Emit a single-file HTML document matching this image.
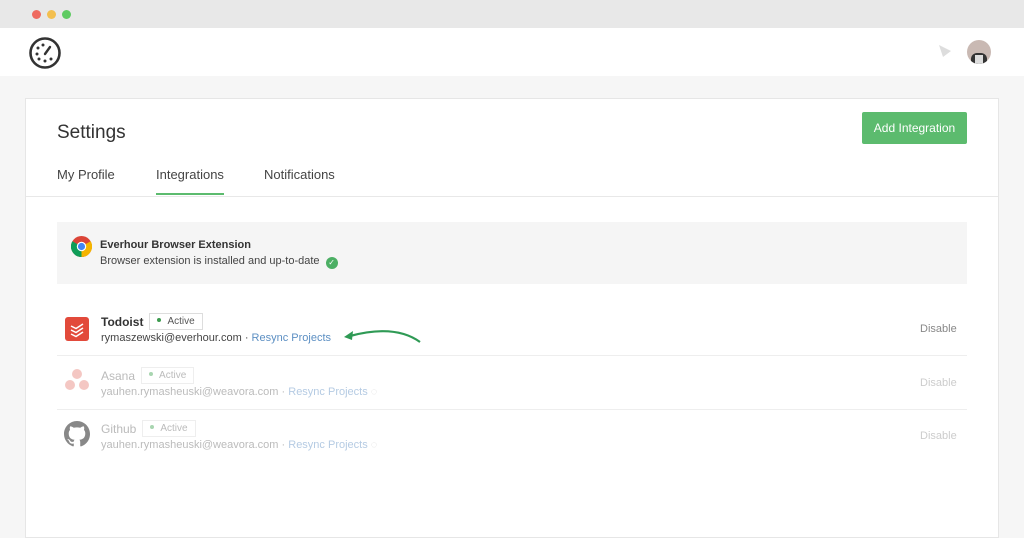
<!DOCTYPE html>
<html><head><meta charset="utf-8"><style>
*{margin:0;padding:0;box-sizing:border-box}
body{width:1024px;height:528px;overflow:hidden;background:#f6f6f6;font-family:"Liberation Sans",sans-serif;position:relative}
.top{position:absolute;left:0;top:0;width:1024px;height:28px;background:#e8e8e8}
.dot{position:absolute;top:10px;width:9px;height:9px;border-radius:50%}
.hdr{position:absolute;left:0;top:28px;width:1024px;height:48px;background:#fff}
.card{position:absolute;left:25px;top:98px;width:974px;height:440px;background:#fff;border:1px solid #e6e6e6}
.abs{position:absolute;white-space:nowrap}
.badge{display:inline-block;border:1px solid #ddd;font-size:10px;padding:2px 7px;color:#555;vertical-align:2px;margin-left:6px;font-weight:normal}
.badge i{display:inline-block;width:4px;height:4px;border-radius:50%;background:#3d9b4f;vertical-align:2px;margin-right:6px}
.sep{position:absolute;left:57px;width:910px;height:1px;background:#eee}
</style></head><body>
<div class="top"></div>
<div class="dot" style="left:32px;background:#ee6a60"></div>
<div class="dot" style="left:47px;background:#f3bf4f"></div>
<div class="dot" style="left:62px;background:#5fcb62"></div>
<div class="hdr"></div>
<svg class="abs" style="left:28px;top:36px" width="34" height="34" viewBox="0 0 34 34"><circle cx="17" cy="17" r="14.5" fill="none" stroke="#333" stroke-width="2.6"/><g fill="#333"><circle cx="10" cy="12" r="1.5"/><circle cx="15" cy="9" r="1.5"/><circle cx="9" cy="18" r="1.5"/><circle cx="11" cy="23" r="1.5"/><circle cx="17" cy="25" r="1.5"/><circle cx="23" cy="23" r="1.5"/></g><path d="M17 18 L22 11" stroke="#333" stroke-width="2.4" stroke-linecap="round"/></svg>
<svg class="abs" style="left:937px;top:43px" width="16" height="16" viewBox="0 0 16 16"><path d="M2 2 L14 8 L6 14 Z" fill="#ddd"/></svg>
<div class="abs" style="left:967px;top:40px;width:24px;height:24px;border-radius:50%;background:#c9b9b3;overflow:hidden"><div style="position:absolute;left:4px;top:13px;width:16px;height:12px;background:#333;border-radius:6px 6px 0 0"></div><div style="position:absolute;left:8px;top:15px;width:8px;height:9px;background:#ddd"></div></div>
<div class="card"></div>
<div class="abs" style="left:57px;top:122px;font-size:19px;color:#333">Settings</div>
<div class="abs" style="left:862px;top:112px;width:105px;height:32px;background:#5cbb6e;border-radius:2px;color:#fff;font-size:12px;text-align:center;line-height:32px">Add Integration</div>
<div class="abs" style="left:57px;top:167px;font-size:13px;color:#444">My Profile</div>
<div class="abs" style="left:156px;top:167px;font-size:13px;color:#444">Integrations</div>
<div class="abs" style="left:156px;top:193px;width:68px;height:2px;background:#5cbb6e"></div>
<div class="abs" style="left:264px;top:167px;font-size:13px;color:#444">Notifications</div>
<div class="abs" style="left:26px;top:196px;width:972px;height:1px;background:#e8e8e8"></div>
<div class="abs" style="left:57px;top:222px;width:910px;height:62px;background:#f5f5f5"></div>
<svg class="abs" style="left:71px;top:236px" width="21" height="21" viewBox="0 0 20 20"><circle cx="10" cy="10" r="10" fill="#db4437"/><path d="M10 10 L1.3 5 A10 10 0 0 0 10 20 Z" fill="#0f9d58"/><path d="M10 10 L10 20 A10 10 0 0 0 18.7 5 Z" fill="#f4b400"/><circle cx="10" cy="10" r="4.5" fill="#fff"/><circle cx="10" cy="10" r="3.4" fill="#4285f4"/></svg>
<div class="abs" style="left:100px;top:239px;font-size:11px;color:#333;font-weight:bold">Everhour Browser Extension</div>
<div class="abs" style="left:100px;top:255px;font-size:11px;color:#444">Browser extension is installed and up-to-date <span style="display:inline-block;width:12px;height:12px;border-radius:50%;background:#4caf64;color:#fff;font-size:8px;text-align:center;line-height:12px;vertical-align:-1px;margin-left:3px">✓</span></div>
<div class="abs" style="left:65px;top:317px;width:24px;height:24px;background:#e24a3b;border-radius:3px"></div>
<svg class="abs" style="left:65px;top:317px" width="24" height="24"><path d="M6 9 L11 11.5 L18 7 M6 13 L11 15.5 L18 11 M6 17 L11 19.5 L18 15" stroke="#fff" stroke-width="1.5" fill="none"/></svg>
<div class="abs" style="left:101px;top:313px;font-size:12px;color:#333;font-weight:bold">Todoist<span class="badge"><i></i>Active</span></div>
<div class="abs" style="left:101px;top:332px;font-size:11px;color:#444">rymaszewski@everhour.com · <span style="color:#5c8fc3">Resync Projects</span></div>
<svg class="abs" style="left:340px;top:322px" width="82" height="24" viewBox="0 0 82 24"><path d="M80 20 Q55 2 10 14" stroke="#2f9a55" stroke-width="2.2" fill="none"/><path d="M4 15 L13 9 L12 18 Z" fill="#2f9a55"/></svg>
<div class="abs" style="left:920px;top:323px;font-size:11px;color:#888">Disable</div>
<div class="sep" style="top:355px"></div>
<svg class="abs" style="left:64px;top:368px" width="26" height="24"><g fill="#f4c7c3"><circle cx="13" cy="6" r="5"/><circle cx="6" cy="17" r="5"/><circle cx="20" cy="17" r="5"/></g></svg>
<div class="abs" style="left:101px;top:367px;font-size:12px;color:#bbb">Asana<span class="badge" style="color:#bbb;border-color:#eee"><i style="background:#a8d5b0"></i>Active</span></div>
<div class="abs" style="left:101px;top:386px;font-size:11px;color:#bbb">yauhen.rymasheuski@weavora.com · <span style="color:#b5cbe3">Resync Projects</span> <span style="color:#ddd">◌</span></div>
<div class="abs" style="left:920px;top:377px;font-size:11px;color:#ccc">Disable</div>
<div class="sep" style="top:409px"></div>
<svg class="abs" style="left:64px;top:421px" width="26" height="26" viewBox="0 0 16 16"><path fill="#888" d="M8 0C3.58 0 0 3.58 0 8c0 3.54 2.29 6.530 5.47 7.59.4.07.55-.17.55-.38v-1.330c-2.23.48-2.7-1.070-2.7-1.070-.36-.92-.89-1.170-.89-1.170-.73-.5.05-.49.05-.49.8.06 1.230.82 1.230.82.71 1.220 1.870.87 2.330.66.07-.52.28-.87.5-1.070-1.780-.2-3.640-.89-3.640-3.950 0-.87.31-1.590.82-2.150-.08-.2-.36-1.020.08-2.120 0 0 .67-.21 2.200.82a7.6 7.6 0 0 1 4 0c1.530-1.040 2.200-.82 2.200-.82.44 1.100.16 1.920.08 2.120.51.56.82 1.270.82 2.150 0 3.070-1.870 3.750-3.650 3.950.29.25.54.73.54 1.480v2.200c0 .21.15.46.55.38A8 8 0 0 0 16 8c0-4.420-3.580-8-8-8z"/></svg>
<div class="abs" style="left:101px;top:420px;font-size:12px;color:#bbb">Github<span class="badge" style="color:#bbb;border-color:#eee"><i style="background:#a8d5b0"></i>Active</span></div>
<div class="abs" style="left:101px;top:439px;font-size:11px;color:#bbb">yauhen.rymasheuski@weavora.com · <span style="color:#b5cbe3">Resync Projects</span> <span style="color:#ddd">◌</span></div>
<div class="abs" style="left:920px;top:430px;font-size:11px;color:#ccc">Disable</div>
</body></html>
